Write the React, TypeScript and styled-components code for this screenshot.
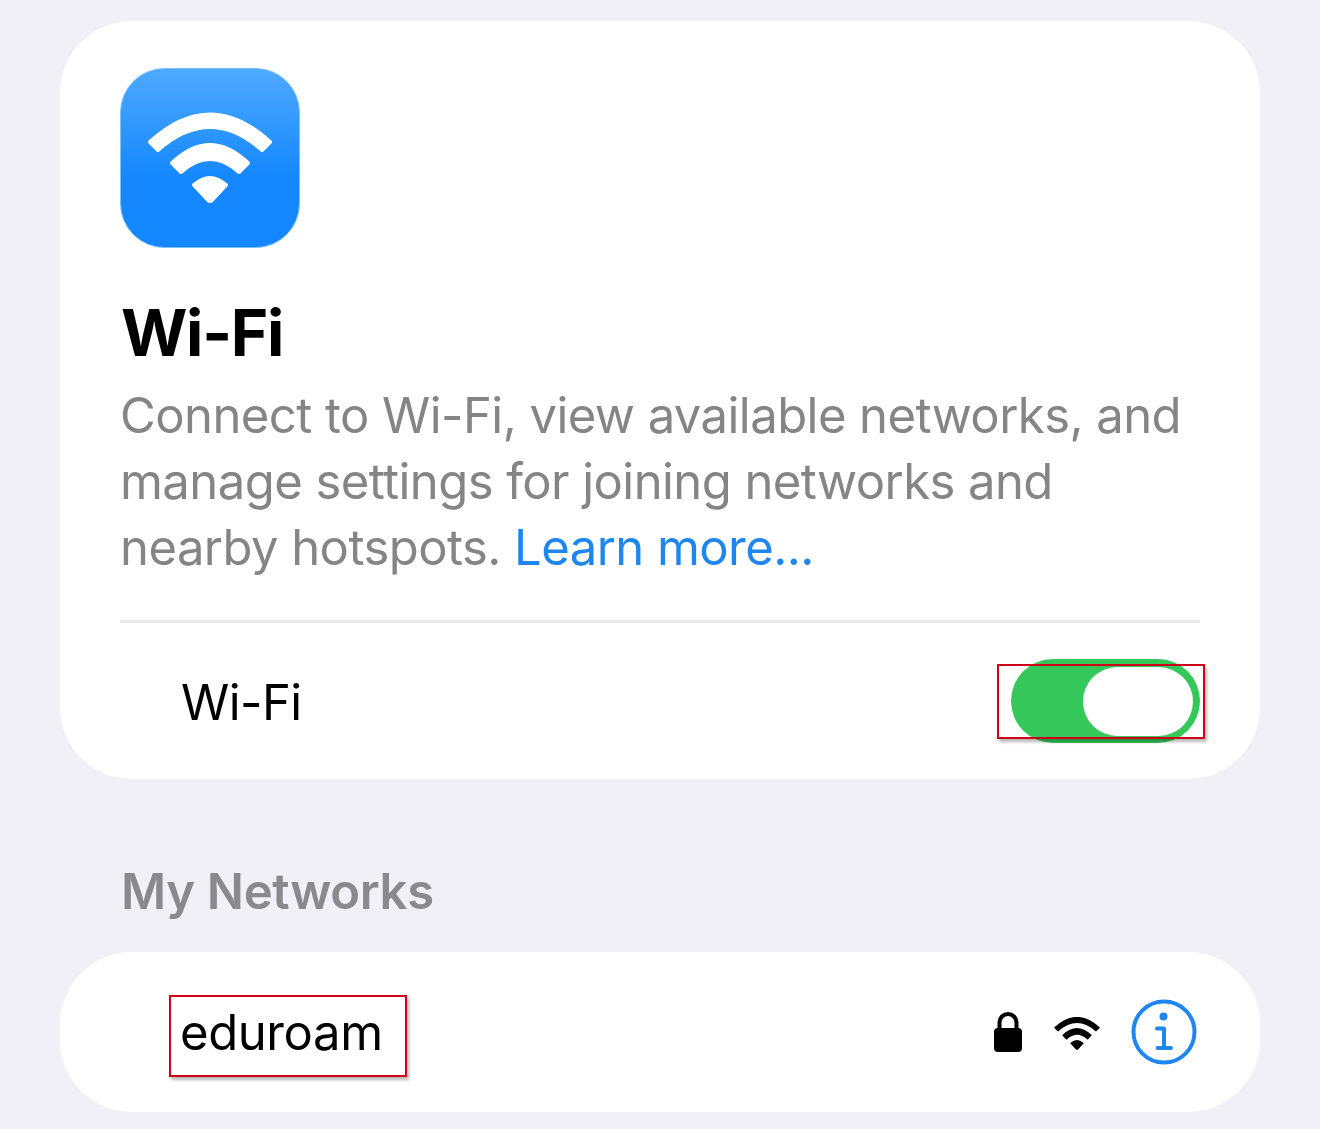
import React from "react";
import styled, { createGlobalStyle } from "styled-components";

const Global = createGlobalStyle`
  html, body { margin: 0; padding: 0; background: #f2f0f7; }
  body { font-family: Inter, "Liberation Sans", sans-serif; }
`;

const Page = styled.div`
  width: 1320px;
  height: 1129px;
  box-sizing: border-box;
  padding: 21px 60px 0;
  overflow: hidden;
  display: flex;
  flex-direction: column;
`;

const HeroCard = styled.section`
  height: 758px;
  box-sizing: border-box;
  background: #fff;
  border-radius: 72px;
  padding: 47px 60px 0;
  display: flex;
  flex-direction: column;
`;

const AppIcon = styled.svg`
  width: 180px;
  height: 180px;
  display: block;
  flex: none;
`;

const Title = styled.h1`
  margin: 45px 0 0;
  font-size: 64px;
  line-height: 80px;
  font-weight: 700;
  color: #000;
  letter-spacing: -1.3px;
  padding-left: 1px;
`;

const Description = styled.p`
  margin: 10px 0 0;
  font-size: 49px;
  line-height: 66px;
  color: #858585;
  letter-spacing: -0.56px;
  white-space: nowrap;
`;

const LearnMore = styled.a`
  color: #1f86f0;
`;

const Divider = styled.hr`
  margin: 39px 0 0;
  border: 0;
  height: 3px;
  background: #e9e9ec;
`;

const ToggleRow = styled.div`
  display: flex;
  align-items: center;
  justify-content: space-between;
  padding: 36px 0 0 61px;
`;

const RowLabel = styled.span`
  font-size: 49px;
  line-height: 84px;
  margin-top: 2px;
  color: #000;
  letter-spacing: -0.56px;
`;

const Toggle = styled.div`
  position: relative;
  width: 189px;
  height: 84px;
  margin-bottom: 2px;
  box-sizing: border-box;
  border-radius: 42px;
  background: #36c75a;
  padding: 8px 7px 7px 72px;
`;

const Knob = styled.div`
  width: 100%;
  height: 100%;
  background: #fff;
  border-radius: 36px;
`;

const Annotation = styled.div`
  position: absolute;
  box-sizing: border-box;
  border: 2px solid #d0021b;
  box-shadow: 2px 3px 3px rgba(0, 0, 0, 0.28);
  pointer-events: none;
`;

const ToggleMark = styled(Annotation)`
  left: -14px;
  top: 5px;
  width: 208px;
  height: 75px;
`;

const NameMark = styled(Annotation)`
  left: -11px;
  top: 4px;
  width: 238px;
  height: 82px;
`;

const SectionTitle = styled.h2`
  margin: 0;
  padding: 80px 0 0 61px;
  font-size: 49px;
  line-height: 66px;
  font-weight: 600;
  color: #8a8a8e;
  letter-spacing: -0.33px;
`;

const NetworkCard = styled.section`
  margin-top: 27px;
  height: 160px;
  box-sizing: border-box;
  background: #fff;
  border-radius: 72px;
  padding: 0 62px 0 120px;
  display: flex;
  align-items: center;
  justify-content: space-between;
`;

const NetworkName = styled.span`
  position: relative;
  font-size: 49px;
  line-height: 84px;
  margin-top: 2px;
  color: #000;
  letter-spacing: -0.4px;
`;

const StatusIcons = styled.div`
  display: flex;
  align-items: center;
`;

const LockIcon = styled.svg`
  width: 30px;
  height: 40px;
  margin-right: 31px;
`;

const SmallWifi = styled.svg`
  width: 46px;
  height: 33px;
  margin: 3px 30px 0 0;
`;

const InfoIcon = styled.svg`
  width: 68px;
  height: 68px;
`;

const WifiShape = ({ fill }: { fill: string }) => (
  <g fill={fill} stroke={fill} strokeWidth="4" strokeLinejoin="round">
    <path d="M30 74 Q90 19 150 74 L142 82 Q90 36 38 82 Z" />
    <path d="M52 95 Q90 59 128 95 L119 104 Q90 78 61 104 Z" />
    <path d="M74 117 Q90 103 106 117 L92 132 Q90 134 88 132 Z" />
  </g>
);

export default function App() {
  return (
    <Page>
      <Global />
      <HeroCard>
        <AppIcon viewBox="0 0 180 180">
          <defs>
            <linearGradient id="appBlue" x1="0" y1="0" x2="0" y2="1">
              <stop offset="0" stopColor="#4fa9ff" />
              <stop offset="0.6" stopColor="#1588ff" />
              <stop offset="1" stopColor="#1487ff" />
            </linearGradient>
          </defs>
          <rect x="0.5" y="0.5" width="179" height="179" rx="44" fill="url(#appBlue)" stroke="#7cc0ff" strokeWidth="1" />
          <WifiShape fill="#fff" />
        </AppIcon>
        <Title>Wi-Fi</Title>
        <Description>
          Connect to Wi-Fi, view available networks, and
          <br />
          manage settings for joining networks and
          <br />
          nearby hotspots. <LearnMore>Learn more...</LearnMore>
        </Description>
        <Divider />
        <ToggleRow>
          <RowLabel>Wi-Fi</RowLabel>
          <Toggle>
            <Knob />
            <ToggleMark />
          </Toggle>
        </ToggleRow>
      </HeroCard>
      <SectionTitle>My Networks</SectionTitle>
      <NetworkCard>
        <NetworkName>
          eduroam
          <NameMark />
        </NetworkName>
        <StatusIcons>
          <LockIcon viewBox="0 0 30 40">
            <path d="M6.5 20 V10.5 a8.5 8.5 0 0 1 17 0 V20" fill="none" stroke="#000" strokeWidth="4" />
            <rect x="1" y="16" width="28" height="24" rx="4" fill="#000" />
          </LockIcon>
          <SmallWifi viewBox="27 45 126 90">
            <WifiShape fill="#000" />
          </SmallWifi>
          <InfoIcon viewBox="0 0 68 68">
            <circle cx="34" cy="34" r="30.5" fill="none" stroke="#1f86f0" strokeWidth="4" />
            <circle cx="33.5" cy="18.5" r="4" fill="#1f86f0" />
            <path d="M27 30.5 H34 V50 M27.5 50 H41" fill="none" stroke="#1f86f0" strokeWidth="4" strokeLinecap="round" strokeLinejoin="round" />
          </InfoIcon>
        </StatusIcons>
      </NetworkCard>
    </Page>
  );
}
